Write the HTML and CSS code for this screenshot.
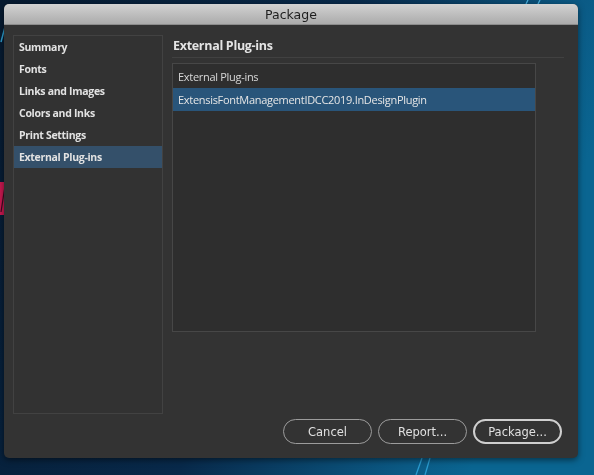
FILE: index.html
```html
<!DOCTYPE html>
<html lang="en">
<head>
    <meta charset="UTF-8">
    <title>Package</title>
    <link rel="stylesheet" href="styles.css">
</head>
<body>
    <svg class="wallpaper" width="594" height="475" viewBox="0 0 594 475">
        <defs>
            <linearGradient id="wp" x1="0" y1="0" x2="1" y2="0.3">
                <stop offset="0" stop-color="#061a30"/>
                <stop offset="0.55" stop-color="#08294a"/>
                <stop offset="0.9" stop-color="#0b5a85"/>
                <stop offset="1" stop-color="#0a6591"/>
            </linearGradient>
        </defs>
        <rect width="594" height="475" fill="url(#wp)"/>
        <path d="M9 12 L1 42" stroke="#2f9fd0" stroke-width="1.5"/>
        <path d="M0 182 L5 182 L5 215 L0 215 Z" fill="#c8184f"/>
        <path d="M5 186 L1 212" stroke="#3a0a22" stroke-width="1.2"/>
        <path d="M422 458 L416 475" stroke="#2a9cd0" stroke-width="1.3"/>
        <path d="M430 458 L425 475" stroke="#2a9cd0" stroke-width="1.3"/>
        <path d="M528 0 L526 4 M540 0 L538 4" stroke="#4aaedc" stroke-width="1.3"/>
    </svg>

    <div class="window">
        <div class="titlebar">Package</div>
        <div class="body">
            <div class="main">
                <ul class="sidebar">
                    <li class="item">Summary</li>
                    <li class="item">Fonts</li>
                    <li class="item">Links and Images</li>
                    <li class="item">Colors and Inks</li>
                    <li class="item">Print Settings</li>
                    <li class="item selected">External Plug-ins</li>
                </ul>
                <div class="panel">
                    <div class="panel-title">External Plug-ins</div>
                    <div class="list">
                        <div class="row head">External Plug-ins</div>
                        <div class="row selected">ExtensisFontManagementIDCC2019.InDesignPlugin</div>
                    </div>
                </div>
            </div>
            <div class="footer">
                <button class="btn">Cancel</button>
                <button class="btn">Report...</button>
                <button class="btn default">Package...</button>
            </div>
        </div>
    </div>
</body>
</html>
```

FILE: styles.css
```css
*{
    margin: 0;
    padding: 0;
    list-style: none;
    box-sizing: border-box;
}
body{
    width: 594px;
    height: 475px;
    overflow: hidden;
    background-color: #08284a;
    font-family: "Open Sans", "DejaVu Sans", sans-serif;
    padding: 4px 0 0 4px;
}
.wallpaper{
    position: fixed;
    left: 0;
    top: 0;
    z-index: 0;
}
.window{
    position: relative;
    z-index: 1;
    width: 574px;
    height: 454px;
    background-color: #333333;
    border-radius: 5px;
    overflow: hidden;
    box-shadow: 0 2px 6px rgba(0,0,0,0.5);
}
.titlebar{
    height: 21px;
    line-height: 21px;
    text-align: center;
    font-family: "DejaVu Sans", sans-serif;
    font-size: 12.5px;
    color: #1e1e1e;
    background: linear-gradient(#d2d2d2, #ababab);
    border-bottom: 1px solid #8c8c8c;
}
.body{
    padding: 10px 14px 0 9px;
}
.main{
    display: flex;
    gap: 9px;
}
.sidebar{
    width: 150px;
    height: 379px;
    border: 1px solid #424242;
    background-color: #323232;
}
.item{
    height: 22px;
    line-height: 22px;
    padding-left: 5px;
    font-size: 10.5px;
    letter-spacing: -0.3px;
    font-weight: bold;
    color: #e2e2e2;
}
.item.selected{
    background-color: #34506a;
}
.panel{
    flex: 1;
}
.panel-title{
    height: 23px;
    line-height: 22px;
    padding-left: 1px;
    font-size: 12.5px;
    letter-spacing: -0.3px;
    font-weight: bold;
    color: #e4e4e4;
    border-bottom: 1px solid #414141;
}
.list{
    width: 364px;
    height: 269px;
    margin-top: 5px;
    border: 1px solid #474747;
    background-color: #2e2e2e;
}
.row{
    padding-left: 5px;
    font-size: 11px;
    letter-spacing: -0.3px;
    color: #d8d8d8;
}
.row.head{
    height: 24px;
    line-height: 26px;
}
.row.selected{
    height: 23px;
    line-height: 23px;
    background-color: #29557a;
    color: #e6e6e6;
}
.footer{
    display: flex;
    justify-content: flex-end;
    gap: 6px;
    margin-top: 5px;
    padding-right: 2px;
}
.btn{
    width: 89px;
    height: 25px;
    border: 1px solid #9c9c9c;
    border-radius: 13px;
    background: transparent;
    color: #e0e0e0;
    font-family: "DejaVu Sans", sans-serif;
    font-size: 11.5px;
}
.btn.default{
    border: 2px solid #cfcfcf;
}
```
